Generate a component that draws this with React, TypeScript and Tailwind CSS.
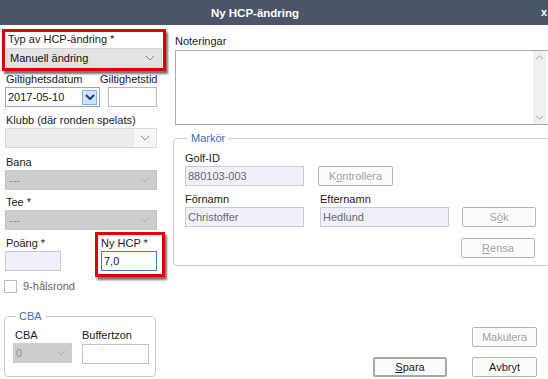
import React from "react";

function Chevron({ color = "#8a8a8a", bold = false }: { color?: string; bold?: boolean }) {
  return (
    <svg width="10" height="6" viewBox="0 0 10 6" className="shrink-0">
      <polyline points="1,1 5,5 9,1" fill="none" stroke={color} strokeWidth={bold ? 2 : 1} />
    </svg>
  );
}

function Select({ value, kind, className = "" }: { value?: string; kind: "gray" | "light" | "disabled"; className?: string }) {
  const bg =
    kind === "gray"
      ? "bg-[#e3e3e3] border-[#d4d4d4] text-[#111]"
      : kind === "light"
      ? "bg-[#ececec] border-[#dadada] text-[#111]"
      : "bg-[#cdcdcd] border-[#c4c4c4] text-[#8d8d8d]";
  return (
    <div className={`flex h-[20px] items-center border ${bg} ${className}`}>
      <span className="flex-1 truncate pl-[3px]">{value}</span>
      <span className={`flex h-full w-[22px] items-center justify-center ${kind === "light" ? "bg-[#f7f7f7]" : ""}`}>
        <Chevron color={kind === "disabled" ? "#b0b0b0" : "#8a8a8a"} />
      </span>
    </div>
  );
}

function Field({ value, className = "" }: { value?: string; className?: string }) {
  return (
    <div className={`flex h-[20px] items-center border border-[#c9c9d9] bg-[#f0f0fa] pl-[2px] text-[#6a6a6a] ${className}`}>
      {value}
    </div>
  );
}

function Btn({ children, disabled, strong, className = "" }: { children: React.ReactNode; disabled?: boolean; strong?: boolean; className?: string }) {
  return (
    <div
      className={`flex h-[20px] items-center justify-center rounded-[2px] bg-[#fbfbfb] ${
        strong ? "border-2 border-[#a8a8a8]" : "border border-[#b4b4b4]"
      } ${disabled ? "text-[#a3a3a3]" : "text-[#1a1a1a]"} ${className}`}
    >
      {children}
    </div>
  );
}

export default function App() {
  return (
    <div className="relative h-[379px] w-[548px] overflow-hidden bg-white font-['Liberation_Sans',Arial,sans-serif] text-[11px] leading-[14px] text-[#1a1a1a]">
      <div className="relative flex h-[25px] items-center justify-center bg-[#4b5567] pr-[38px] text-[11.5px] font-bold text-white">
        Ny HCP-ändring
        <span className="absolute right-[1px] top-[5px] text-[11px] font-bold">x</span>
      </div>

      <div className="flex">
        {/* left column */}
        <div className="flex w-[166px] shrink-0 flex-col pl-[2px]">
          <div className="mt-[4px] h-[42px] w-[164px] border-[3px] border-[#e00000] px-[1px] shadow-[2px_3px_2px_rgba(0,0,0,0.55)]">
            <div className="pl-[2px]">Typ av HCP-ändring *</div>
            <Select value="Manuell ändring" kind="gray" className="mt-[2px]" />
          </div>

          <div className="mt-[1px] flex">
            <div className="ml-[3px] flex w-[95px] flex-col">
              <span className="pl-[1px]">Giltighetsdatum</span>
              <div className="mt-[1px] flex h-[20px] items-center border border-[#8fa7c8] bg-white pl-[2px]">
                <span className="flex-1">2017-05-10</span>
                <span className="mr-[2px] flex h-[15px] w-[15px] items-center justify-center border border-[#86b2e2] bg-[#cfe2f8]">
                  <Chevron color="#1f3d73" bold />
                </span>
              </div>
            </div>
            <div className="flex flex-col">
              <span>Giltighetstid</span>
              <div className="ml-[8px] mt-[1px] h-[20px] w-[49px] border border-[#b9b9b9] bg-white" />
            </div>
          </div>

          <div className="ml-[3px] mt-[6px] w-[152px]">
            <div className="pl-[1px]">Klubb (där ronden spelats)</div>
            <Select kind="light" className="mt-[1px]" />
          </div>
          <div className="ml-[3px] mt-[7px] w-[152px]">
            <div className="pl-[1px]">Bana</div>
            <Select value="---" kind="disabled" className="mt-[1px]" />
          </div>
          <div className="ml-[3px] mt-[5px] w-[152px]">
            <div className="pl-[1px]">Tee *</div>
            <Select value="---" kind="disabled" className="mt-[1px]" />
          </div>

          <div className="mt-[2px] flex">
            <div className="ml-[3px] mt-[4px] flex w-[90px] flex-col">
              <span className="pl-[1px]">Poäng *</span>
              <Field className="mt-[1px] w-[56px]" />
            </div>
            <div className="h-[45px] w-[70px] border-[3px] border-[#e00000] pl-[3px] shadow-[2px_3px_2px_rgba(0,0,0,0.55)]">
              <div className="mt-[1px]">Ny HCP *</div>
              <div className="mt-[1px] flex h-[20px] w-[56px] items-center border border-[#3d7fbf] bg-white pl-[2px]">7,0</div>
            </div>
          </div>

          <div className="ml-[2px] mt-[2px] flex items-center">
            <span className="h-[13px] w-[13px] border border-[#bcbcbc] bg-white" />
            <span className="ml-[6px] text-[#666]">9-hålsrond</span>
          </div>

          <fieldset className="ml-[2px] mt-[16px] h-[68px] w-[152px] rounded-[4px] border border-[#c9c9c9] pl-[8px]">
            <legend className="ml-[3px] px-[3px] text-[#3b6fb0]">CBA</legend>
            <div className="mt-[5px] flex">
              <div className="flex w-[69px] flex-col">
                <span className="pl-[2px]">CBA</span>
                <div className="mt-[1px] flex h-[20px] w-[59px] items-center bg-[#cdcdcd] pl-[3px] text-[#8d8d8d]">
                  <span className="flex-1">0</span>
                  <span className="mr-[6px]">
                    <Chevron color="#b0b0b0" />
                  </span>
                </div>
              </div>
              <div className="flex flex-col">
                <span>Buffertzon</span>
                <div className="mt-[2px] h-[20px] w-[67px] border border-[#c4c4c4] bg-white" />
              </div>
            </div>
          </fieldset>
        </div>

        {/* right column */}
        <div className="flex flex-1 flex-col">
          <div className="ml-[9px] mt-[9px]">Noteringar</div>
          <div className="ml-[9px] mt-[2px] flex h-[75px] w-[380px] border border-[#a9a9a9] bg-white">
            <div className="flex-1" />
            <div className="mr-[8px] flex w-[13px] flex-col items-center justify-between bg-[#f0f0f0] py-[4px]">
              <svg width="9" height="5" viewBox="0 0 9 5">
                <polyline points="1,4 4.5,1 8,4" fill="none" stroke="#a0a0a0" />
              </svg>
              <svg width="9" height="5" viewBox="0 0 9 5">
                <polyline points="1,1 4.5,4 8,1" fill="none" stroke="#a0a0a0" />
              </svg>
            </div>
          </div>

          <fieldset className="ml-[7px] mt-[6px] h-[135px] w-[390px] rounded-[4px] border border-[#c9c9c9] pl-[11px]">
            <legend className="ml-[3px] px-[3px] text-[#3b6fb0]">Markör</legend>
            <div className="mt-[6px]">Golf-ID</div>
            <div className="mt-[1px] flex">
              <Field value="880103-003" className="w-[119px]" />
              <Btn disabled className="ml-[14px] w-[75px]">
                <span>
                  K<span className="underline">o</span>ntrollera
                </span>
              </Btn>
            </div>
            <div className="mt-[6px] flex">
              <div className="flex w-[135px] flex-col">
                <span>Förnamn</span>
                <Field value="Christoffer" className="mt-[1px] w-[119px]" />
              </div>
              <div className="flex flex-col">
                <span>Efternamn</span>
                <Field value="Hedlund" className="mt-[1px] w-[129px]" />
              </div>
              <Btn disabled className="ml-[13px] mt-[15px] w-[74px]">
                <span>
                  S<span className="underline">ö</span>k
                </span>
              </Btn>
            </div>
            <div className="mt-[11px] flex">
              <Btn disabled className="ml-[276px] w-[74px]">
                <span>
                  <span className="underline">R</span>ensa
                </span>
              </Btn>
            </div>
          </fieldset>

          <div className="mt-[61px] flex">
            <Btn disabled className="ml-[306px] w-[65px]">
              Makulera
            </Btn>
          </div>
          <div className="mt-[10px] flex">
            <Btn strong className="ml-[207px] w-[74px]">
              <span>
                <span className="underline">S</span>para
              </span>
            </Btn>
            <Btn className="ml-[25px] w-[65px]">Avbryt</Btn>
          </div>
        </div>
      </div>
    </div>
  );
}
